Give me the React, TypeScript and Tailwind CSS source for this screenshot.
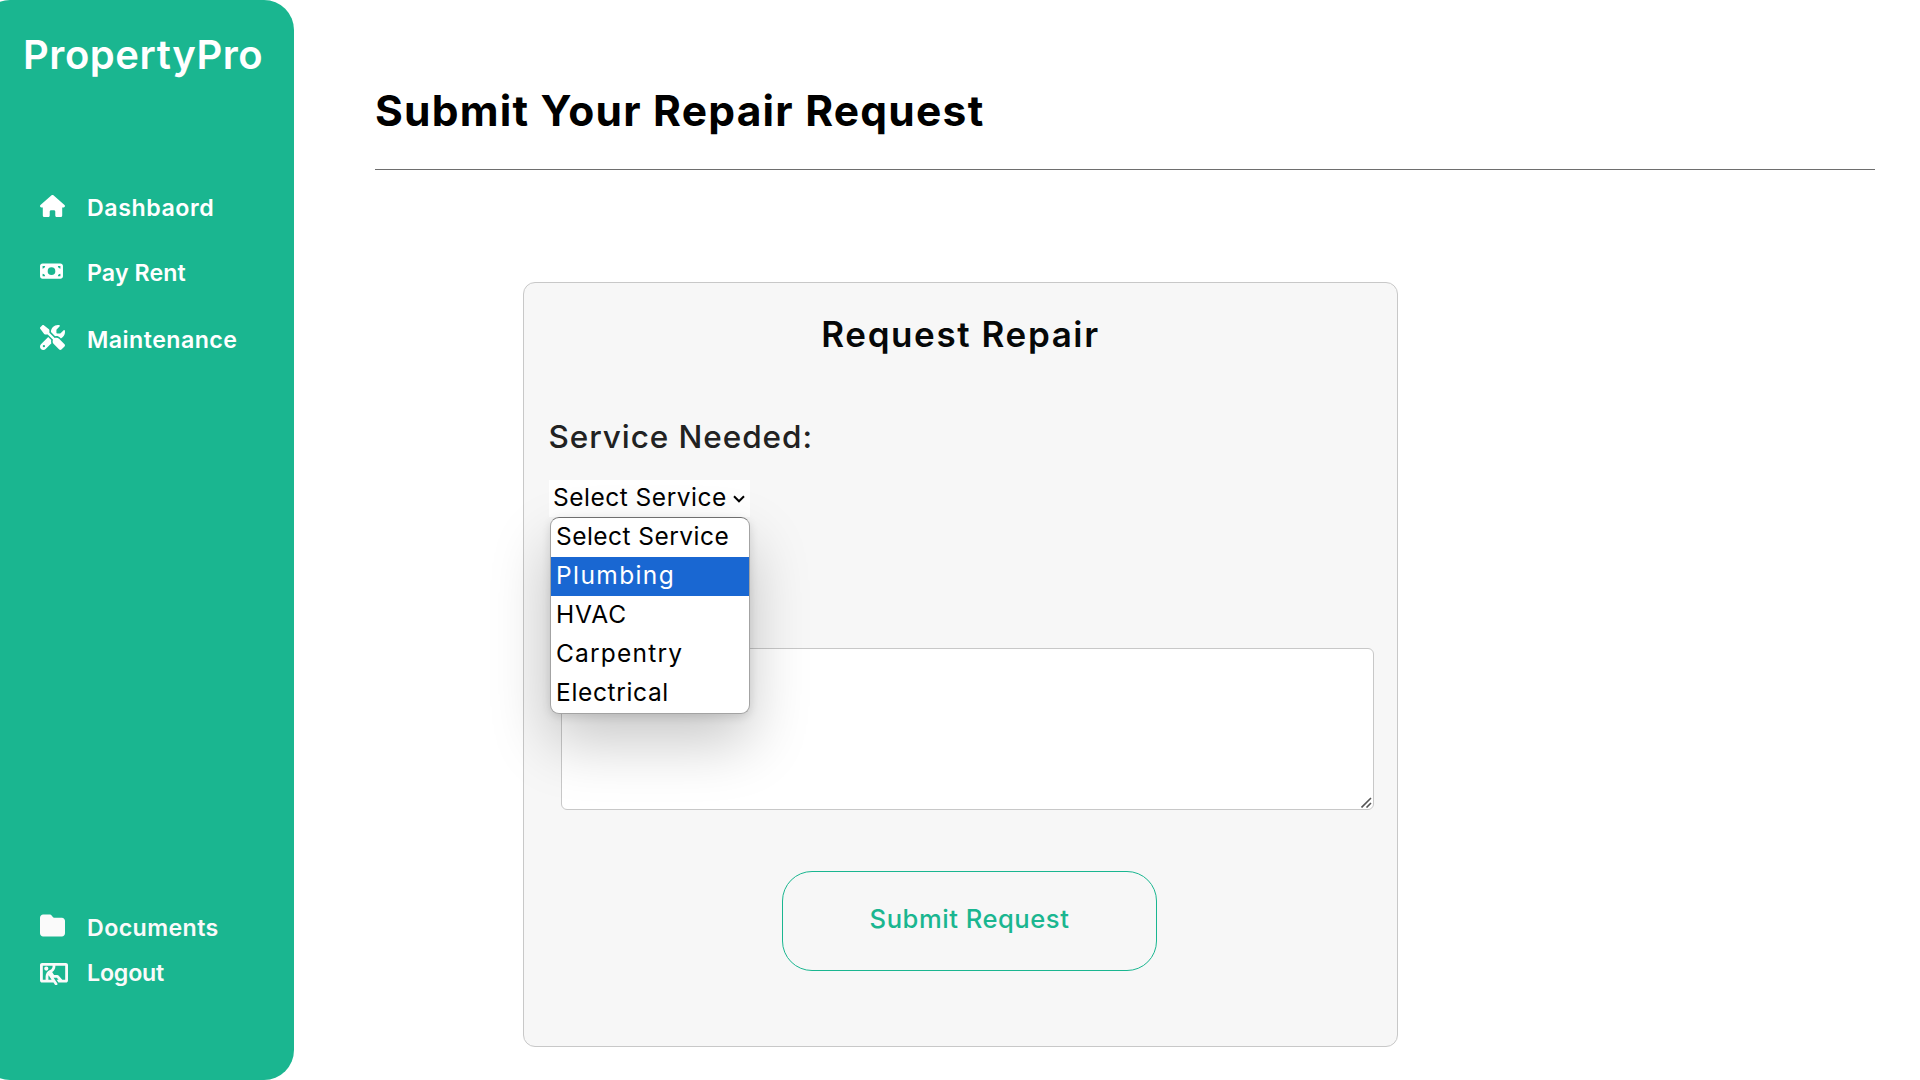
import React from "react";
import type { ReactNode } from "react";
import {
  FaHouse,
  FaMoneyBill,
  FaScrewdriverWrench,
  FaFolder,
  FaPersonThroughWindow,
} from "react-icons/fa6";

function NavItem({ icon, label, spacing }: { icon: ReactNode; label: string; spacing: string }) {
  return (
    <a className="flex h-8 items-center pl-10">
      <span className="flex w-[47px] shrink-0 items-center">{icon}</span>
      <span className={`text-[23.2px] leading-8 font-semibold whitespace-nowrap ${spacing}`}>{label}</span>
    </a>
  );
}

function Sidebar() {
  return (
    <aside className="-ml-5 flex h-[1080px] w-[314px] shrink-0 flex-col rounded-[30px] bg-[#1ab690] pt-[35px] pl-5 text-[#fafafa]">
      <h1 className="pl-[23px] text-[40px] leading-10 font-semibold tracking-[0.55px] text-white">PropertyPro</h1>
      <nav className="mt-[117px] flex flex-col text-white">
        <NavItem label="Dashbaord" spacing="tracking-[0.55px]" icon={<FaHouse className="mb-1 h-[22.2px] w-[25px]" />} />
        <div className="mt-[33px]">
          <NavItem label="Pay Rent" spacing="tracking-[0.1px]" icon={<FaMoneyBill className="mb-1 h-[20.4px] w-[23px]" />} />
        </div>
        <div className="mt-[35px]">
          <NavItem label="Maintenance" spacing="tracking-[0.45px]" icon={<FaScrewdriverWrench className="mb-[5px] size-[25px]" />} />
        </div>
      </nav>
      <nav className="mt-[556px] flex flex-col gap-[13px]">
        <NavItem label="Documents" spacing="tracking-[0.4px]" icon={<FaFolder className="mb-1.5 size-[25px]" />} />
        <NavItem label="Logout" spacing="tracking-[-0.2px]" icon={<FaPersonThroughWindow className="mt-0.5 h-[22.4px] w-7" />} />
      </nav>
    </aside>
  );
}

const options = [
  { label: "Select Service", style: "tracking-[0.46px]" },
  { label: "Plumbing", style: "tracking-[1.4px] bg-[#1967d2] text-white" },
  { label: "HVAC", style: "tracking-[0.9px]" },
  { label: "Carpentry", style: "tracking-[1.2px]" },
  { label: "Electrical", style: "tracking-[0.65px]" },
];

function ServiceSelect() {
  return (
    <div className="relative z-10 ml-[25px] w-[201px]">
      <div className="flex h-[37px] items-center bg-white pb-0.5 pl-1 text-[24.5px] text-black">
        <span className="leading-[35px] tracking-[0.5px] whitespace-nowrap">Select Service</span>
        <svg className="mt-0.5 ml-[6px] h-2 w-3" viewBox="0 0 12 8" fill="none" stroke="#000" strokeWidth="2">
          <path d="M1 1.3 6 6.3 11 1.3" />
        </svg>
      </div>
      <div className="absolute top-[37px] left-px w-[200px] overflow-hidden rounded-[9px] border border-[#a3a3a3] border-t-[#6f6f6f] bg-white text-[24.5px] text-black shadow-[0_28px_60px_rgba(0,0,0,0.22),0_3px_10px_rgba(0,0,0,0.12)]">
        {options.map((o) => (
          <div key={o.label} className={`h-[39px] pl-[5px] leading-[37px] whitespace-nowrap ${o.style}`}>
            {o.label}
          </div>
        ))}
      </div>
    </div>
  );
}

function RepairForm() {
  return (
    <form className="mt-[112px] ml-[148px] flex h-[765px] w-[875px] flex-col rounded-[12px] border border-[#c8c8c8] bg-[#f7f7f7]">
      <h3 className="mt-[31px] text-center text-[35px] leading-10 font-semibold tracking-[1.6px] text-[#060808]">Request Repair</h3>
      <label className="mt-[63px] ml-[24.5px] text-[31.5px] leading-10 font-medium tracking-[0.93px] text-[#222]">Service Needed:</label>
      <div className="mt-[23px] h-[37px]">
        <ServiceSelect />
      </div>
      <div className="mt-[131px] ml-[37px] flex h-[162px] w-[813px] items-end justify-end rounded-[6px] border border-[#c8c8c8] bg-white">
        <svg className="mr-px mb-px size-[11px]" viewBox="0 0 11 11" stroke="#555" strokeWidth="1.6">
          <path d="M0.5 10.5 10 1M5.5 10.5 10 6" />
        </svg>
      </div>
      <button type="button" className="mt-[61px] ml-[258px] h-[100px] w-[375px] rounded-[30px] border border-[#1ab690] pb-[4px] text-[25.6px] font-medium tracking-[0.52px] text-[#1ab690]">
        Submit Request
      </button>
    </form>
  );
}

export default function App() {
  return (
    <div className="flex h-[1080px] w-[1920px] overflow-hidden bg-white font-['Inter',sans-serif]">
      <Sidebar />
      <main className="ml-[81px] w-[1500px]">
        <h2 className="h-[169px] pt-[86px] text-[42.5px] leading-[50px] font-bold tracking-[1.23px] text-black">Submit Your Repair Request</h2>
        <hr className="h-px border-0 bg-[#6e6e6e]" />
        <RepairForm />
      </main>
    </div>
  );
}
